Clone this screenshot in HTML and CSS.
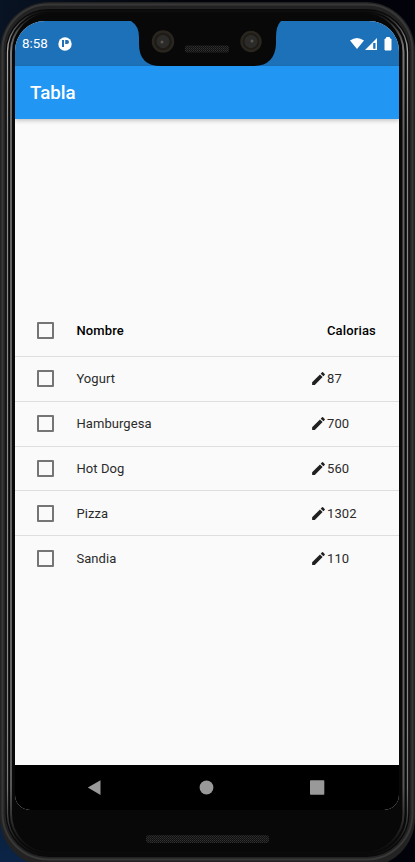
FILE: index.html
```html
<!DOCTYPE html>
<html lang="es">
<head>
<meta charset="utf-8">
<title>Tabla</title>
<link rel="stylesheet" href="styles.css">
</head>
<body>
<svg width="0" height="0" class="defs" aria-hidden="true">
  <symbol id="edit" viewBox="0 0 24 24"><path d="M3 17.25V21h3.75L17.81 9.94l-3.75-3.75L3 17.25zM20.71 7.04a1 1 0 0 0 0-1.41l-2.34-2.34a1 1 0 0 0-1.41 0l-1.83 1.83 3.75 3.75 1.83-1.83z"/></symbol>
</svg>
<div class="phone">
  <svg class="shell" viewBox="0 0 415 862" aria-hidden="true">
    <defs>
      <pattern id="mesh" width="2" height="2" patternUnits="userSpaceOnUse"><rect width="2" height="2" fill="#111"/><rect width="1" height="1" fill="#303030"/><rect x="1" y="1" width="1" height="1" fill="#252525"/></pattern>
      <linearGradient id="rim" gradientUnits="userSpaceOnUse" x1="0" y1="10" x2="0" y2="856"><stop offset="0" stop-color="#0a0a0a"/><stop offset=".012" stop-color="#333"/><stop offset=".045" stop-color="#aaa"/><stop offset=".15" stop-color="#888"/><stop offset=".85" stop-color="#888"/><stop offset=".92" stop-color="#777"/><stop offset=".98" stop-color="#1a1a1a"/><stop offset="1" stop-color="#0a0a0a"/></linearGradient>
    </defs>
    <rect x="0" y="2" width="415" height="865" rx="49" fill="#222"/>
    <rect x="2.500" y="4.500" width="410" height="855" rx="46" fill="none" stroke="#383838" stroke-width="2"/>
    <rect x="5.500" y="9" width="404" height="848" rx="43" fill="#090909"/>
    <rect x="7.500" y="11" width="400" height="844" rx="41" fill="none" stroke="url(#rim)" stroke-width="1.300"/>
    <rect x="11" y="14" width="392.500" height="838" rx="38" fill="none" stroke="url(#rim)" stroke-width="2" opacity=".7"/>
    <rect x="13" y="13" width="388" height="839" rx="37" fill="#080808"/>
    <rect x="146" y="835" width="123" height="8" rx="3" fill="url(#mesh)"/>
  </svg>
  <main class="screen">
    <header class="status">
      <span class="time">8:58</span>
      <svg class="notice" viewBox="0 0 14 14"><circle cx="7" cy="7" r="6.700" fill="#fff"/><path d="M4 3h2v7H4zM7.200 3H9a2 2 0 0 1 0 4H7.200z" fill="#1d71b8"/></svg>
      <svg class="signals" viewBox="0 0 43 14"><path d="M0 3.500Q7 -1.500 14 3.500L7 12z" fill="#fff"/><path d="M27 1v12H15z" fill="#fff"/><path d="M23.200 6h2.300v5.700h-2.300z" fill="#1d71b8"/><path d="M35 2h1.500V.5h3V2H41v11h-6z" fill="#fff" stroke="#fff" stroke-linejoin="round"/></svg>
    </header>
    <h1 class="appbar">Tabla</h1>
    <section class="content">
      <div class="table">
        <div class="row head"><i class="check"></i><span class="name">Nombre</span><span class="value">Calorias</span></div>
        <div class="row"><i class="check"></i><span class="name">Yogurt</span><svg class="edit"><use href="#edit"/></svg><span class="value">87</span></div>
        <div class="row"><i class="check"></i><span class="name">Hamburgesa</span><svg class="edit"><use href="#edit"/></svg><span class="value">700</span></div>
        <div class="row"><i class="check"></i><span class="name">Hot Dog</span><svg class="edit"><use href="#edit"/></svg><span class="value">560</span></div>
        <div class="row"><i class="check"></i><span class="name">Pizza</span><svg class="edit"><use href="#edit"/></svg><span class="value">1302</span></div>
        <div class="row"><i class="check"></i><span class="name">Sandia</span><svg class="edit"><use href="#edit"/></svg><span class="value">110</span></div>
      </div>
    </section>
    <nav class="nav">
      <svg viewBox="0 0 16 16"><path d="M1.800 7.500L14.500 .3v14.700z"/></svg>
      <svg viewBox="0 0 16 16"><circle cx="8.500" cy="7.500" r="6.900"/></svg>
      <svg viewBox="0 0 16 16"><rect x="1" y=".3" width="14.300" height="14.500" rx=".8"/></svg>
    </nav>
  </main>
  <svg class="notch" viewBox="0 0 150 48" aria-hidden="true">
    <path d="M0 0H150V1Q145 6 145 17V24Q144 46 122 46H30Q8 46 8 24V17Q8 6 0 1z" fill="#080808"/>
    <g stroke="#29251f" stroke-width="2.500"><circle cx="32" cy="21.500" r="10" fill="#1e1b17"/><circle cx="120" cy="21.500" r="9.500" fill="#1e1b17"/></g>
    <g fill="#2b2b2a" stroke="#302e2b"><circle cx="32" cy="21.500" r="6"/><circle cx="120" cy="21.500" r="6"/></g>
    <g fill="#5b554e"><circle cx="31" cy="22" r="1.500"/><circle cx="121" cy="21" r="1.500"/></g>
    <rect x="54" y="25.500" width="44" height="7" rx="2" fill="url(#mesh)"/>
  </svg>
</div>
</body>
</html>
```
FILE: styles.css
```css
* { box-sizing: border-box; }
body { margin: 0; background: linear-gradient(90deg, #081323, #020309 45%, #02030a); font-family: Roboto, sans-serif; }
.defs { position: absolute; }
.phone { position: relative; width: 415px; height: 862px; padding: 21px 16px 52px 15px; overflow: hidden; background: linear-gradient(#0000 80%, #0b2446) left / 40px 100% no-repeat; }
.shell { position: absolute; inset: 0; width: 415px; height: 862px; }
.screen { position: relative; display: flex; flex-direction: column; width: 384px; height: 789px; overflow: hidden; border-radius: 30px 30px 15px 15px; background: #fafafa; }
.status { display: flex; align-items: center; flex: none; height: 45px; padding: 0 7px; background: #1d71b8; color: #fff; }
.time { width: 35.500px; font-size: 13.400px; line-height: 16px; }
.notice { width: 14px; height: 14px; }
.signals { width: 43px; height: 14px; margin-right: -1px; margin-left: auto; }
.appbar { z-index: 1; height: 53px; flex: none; margin: 0; padding-left: 15px; background: #2196f3; color: #fff; font-size: 18.700px; font-weight: 500; line-height: 54px; box-shadow: 0 2px 4px #0003; }
.content { display: flex; flex: 1; flex-direction: column; justify-content: center; }
.table { height: 276px; }
.row { display: flex; align-items: center; height: 44.800px; padding-left: 22px; border-top: 1px solid #dedede; color: #2b2b2b; font-size: 13px; letter-spacing: .08px; }
.head { height: 52px; border: 0; font-weight: 500; color: #000; letter-spacing: .14px; }
.check { width: 17px; height: 17px; border: 2px solid #757575; border-radius: 1px; }
.name { width: 234px; margin-left: 22.400px; }
.head .name { width: 250.600px; }
.edit { width: 17px; height: 17px; margin-left: -.4px; fill: #202020; }
.nav { display: flex; align-items: center; justify-content: space-between; height: 45px; padding: 0 74px 0 71px; background: #000; fill: #999; }
.nav svg { width: 16px; height: 16px; }
.notch { position: absolute; left: 131px; top: 20px; width: 150px; height: 48px; }
```
